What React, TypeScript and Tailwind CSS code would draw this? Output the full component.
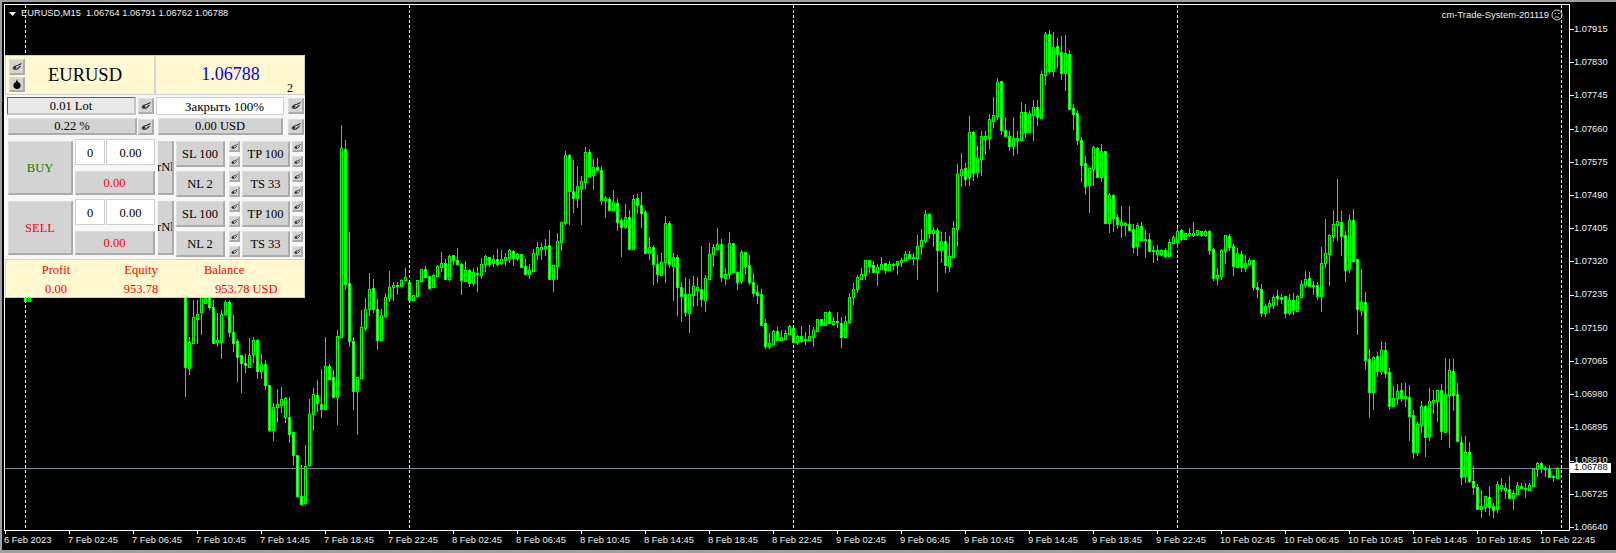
import React from "react";

type Row = number[];

// candles as read off the chart: [high, bodyTop, bodyBottom, low, bear?] in 1/3 px from y0
const segments: { x0: number; y0: number; rows: Row[] }[] = [
  { x0: 25, y0: 280, rows: [[0, 0, 63, 66, 1], [0, 0, 63, 66]] },
  {
    x0: 185,
    y0: 280,
    rows: [
      [0, 0, 262, 350, 1], [172, 187, 265, 285], [60, 112, 189, 192], [60, 103, 117, 192], [0, 40, 95, 165],
      [50, 55, 68, 70], [40, 50, 82, 90, 1], [60, 82, 190, 192, 1], [100, 181, 187, 200], [90, 103, 185, 236],
      [60, 67, 103, 108], [60, 67, 157, 170, 1], [105, 157, 190, 215, 1], [178, 184, 230, 305, 1], [224, 226, 250, 338, 1],
      [222, 250, 256, 278, 1], [175, 226, 260, 262], [172, 181, 223, 250], [178, 181, 272, 296, 1], [222, 253, 272, 298],
      [240, 253, 314, 330, 1], [314, 316, 449, 455, 1], [368, 382, 449, 482], [328, 371, 382, 430], [322, 358, 374, 400],
      [350, 355, 412, 430], [350, 412, 461, 488, 1], [457, 457, 524, 555, 1], [524, 524, 647, 655, 1], [555, 647, 672, 678, 1],
      [495, 557, 670, 675], [358, 403, 554, 562], [325, 343, 401, 452], [300, 346, 370, 395, 1], [268, 373, 388, 415, 1],
      [172, 259, 388, 390], [252, 259, 296, 300, 1], [270, 292, 350, 352, 1], [150, 169, 350, 435],
    ],
  },
  { x0: 341, y0: 110, rows: [[45, 115, 681, 683], [90, 118, 521, 540, 1], [365, 520, 694, 712, 1]] },
  { x0: 353, y0: 280, rows: [[170, 184, 332, 390, 1], [290, 292, 332, 465], [90, 141, 293, 295]] },
  {
    x0: 365,
    y0: 110,
    rows: [
      [565, 598, 654, 662], [490, 538, 597, 618], [507, 535, 598, 610, 1], [568, 598, 689, 720, 1], [598, 616, 689, 690],
      [548, 562, 617, 624], [484, 532, 563, 575], [516, 526, 532, 572], [516, 525, 526, 555], [507, 511, 527, 528],
      [475, 502, 510, 512], [515, 517, 570, 573, 1], [556, 556, 569, 570], [510, 511, 557, 558], [476, 478, 513, 515],
      [468, 478, 500, 503, 1], [497, 499, 533, 534, 1], [492, 495, 530, 531], [465, 468, 497, 500], [426, 460, 470, 487],
      [447, 460, 507, 509, 1], [434, 438, 507, 513], [434, 436, 450, 465, 1], [414, 451, 461, 466, 1], [460, 462, 509, 555, 1],
      [453, 481, 513, 516], [478, 481, 518, 530, 1], [475, 487, 518, 527], [470, 490, 493, 546], [445, 462, 494, 507],
      [436, 438, 462, 486], [440, 442, 461, 470, 1], [435, 448, 458, 471], [418, 447, 461, 468, 1], [420, 448, 459, 466],
      [428, 442, 450, 468], [417, 420, 443, 460], [420, 423, 443, 468, 1], [430, 432, 443, 454], [431, 433, 471, 474, 1],
      [447, 469, 491, 494, 1], [462, 481, 491, 507], [418, 430, 482, 484], [396, 412, 431, 450], [400, 411, 416, 450],
      [388, 408, 413, 438], [360, 406, 506, 508, 1], [466, 466, 506, 545], [370, 394, 467, 510], [335, 337, 395, 423],
      [123, 136, 338, 344], [132, 136, 242, 345, 1], [150, 244, 263, 309, 1], [168, 229, 263, 294], [197, 214, 233, 345],
      [112, 127, 215, 236], [118, 127, 197, 203, 1], [148, 172, 194, 240], [144, 172, 179, 180, 1], [168, 179, 269, 285, 1],
      [258, 265, 269, 324], [262, 268, 299, 303, 1], [240, 277, 299, 303], [267, 280, 335, 362, 1],
    ],
  },
  {
    x0: 621,
    y0: 130,
    rows: [
      [265, 270, 290, 380, 1], [222, 262, 290, 296], [240, 262, 356, 358, 1], [195, 208, 357, 360], [192, 205, 226, 252, 1],
      [186, 226, 248, 294, 1], [240, 247, 370, 372, 1], [322, 352, 368, 390], [346, 352, 403, 465, 1], [376, 403, 433, 458, 1],
      [370, 397, 436, 438], [258, 280, 395, 458], [273, 280, 403, 414, 1], [370, 382, 407, 513], [376, 382, 472, 558, 1],
      [456, 472, 497, 576, 1], [441, 493, 545, 560, 1], [447, 493, 548, 609], [438, 469, 494, 530], [442, 472, 479, 528],
      [348, 478, 506, 530, 1], [435, 445, 509, 546], [339, 373, 446, 450], [342, 351, 373, 411], [294, 343, 357, 362],
      [327, 343, 440, 456, 1], [415, 433, 443, 464], [306, 340, 431, 447], [340, 340, 425, 426, 1], [422, 427, 455, 480, 1],
      [360, 367, 453, 462], [365, 367, 407, 435, 1], [375, 406, 455, 465, 1], [430, 457, 488, 500, 1], [465, 485, 494, 522, 1],
      [477, 493, 584, 587, 1], [567, 580, 647, 656, 1], [610, 640, 647, 657], [600, 603, 641, 645], [590, 604, 630, 632, 1],
      [600, 622, 629, 630], [600, 610, 626, 628], [586, 587, 611, 612], [594, 595, 636, 638, 1], [615, 618, 635, 645],
      [588, 617, 632, 640, 1], [606, 628, 631, 645], [585, 619, 630, 632], [591, 601, 620, 651], [567, 568, 603, 606],
      [566, 568, 584, 587, 1], [545, 547, 585, 586], [543, 546, 578, 580, 1], [562, 574, 581, 588], [546, 574, 577, 594],
      [560, 580, 620, 654, 1], [558, 574, 620, 622], [490, 502, 575, 582], [460, 478, 502, 525], [435, 441, 476, 488],
      [415, 432, 446, 448], [390, 391, 434, 450], [390, 391, 407, 430, 1], [393, 406, 425, 427, 1], [402, 412, 425, 468],
      [381, 403, 416, 420], [398, 400, 420, 432, 1], [393, 403, 420, 422], [398, 402, 404, 420], [392, 394, 404, 435],
      [384, 391, 395, 410], [363, 373, 389, 396], [364, 373, 383, 388, 1], [368, 381, 384, 404], [315, 349, 383, 450],
      [297, 331, 347, 375], [240, 253, 332, 338], [250, 253, 308, 327, 1], [291, 301, 308, 351], [294, 300, 359, 486, 1],
    ],
  },
  {
    x0: 941,
    y0: 20,
    rows: [
      [636, 664, 690, 730], [636, 664, 735, 760, 1], [648, 708, 738, 755], [603, 625, 710, 712], [432, 462, 626, 680],
      [400, 448, 464, 500], [430, 445, 476, 498, 1], [288, 337, 470, 498], [333, 335, 458, 484, 1], [375, 415, 455, 474],
      [333, 348, 416, 468], [333, 349, 356, 405], [282, 297, 353, 387], [232, 286, 302, 323], [175, 186, 287, 300],
      [183, 184, 329, 345, 1], [291, 329, 347, 352, 1], [333, 349, 377, 393, 1], [291, 355, 377, 407], [333, 354, 361, 402],
      [246, 277, 359, 360], [252, 277, 335, 354, 1], [273, 279, 335, 336], [240, 262, 284, 363], [240, 262, 290, 318, 1],
      [153, 163, 293, 296], [36, 42, 164, 195], [30, 42, 152, 162, 1], [36, 82, 152, 171], [54, 79, 101, 145, 1],
      [48, 97, 159, 180, 1], [45, 100, 159, 213], [90, 103, 268, 270, 1], [252, 265, 281, 330, 1], [270, 280, 359, 375, 1],
      [351, 361, 434, 486, 1], [408, 430, 497, 525, 1], [442, 445, 495, 579], [379, 381, 446, 498], [382, 385, 472, 474, 1],
      [372, 393, 471, 486], [392, 394, 608, 612, 1], [519, 526, 608, 639], [522, 526, 593, 636, 1], [582, 592, 612, 627, 1],
      [558, 606, 614, 654], [605, 610, 614, 648], [558, 613, 630, 632, 1],
    ],
  },
  {
    x0: 1133,
    y0: 160,
    rows: [
      [192, 208, 260, 278, 1], [190, 196, 257, 288], [186, 199, 239, 240, 1], [210, 238, 239, 293], [219, 238, 273, 276, 1],
      [258, 271, 274, 308], [256, 271, 281, 303], [267, 270, 282, 288], [265, 271, 287, 293, 1], [238, 247, 287, 288],
      [225, 232, 248, 250], [205, 214, 245, 263], [207, 211, 236, 243, 1], [218, 220, 236, 238], [205, 220, 224, 232],
      [186, 220, 224, 232], [209, 211, 222, 228], [212, 214, 226, 230, 1], [210, 213, 226, 232], [211, 213, 269, 285, 1],
      [265, 267, 353, 363, 1], [324, 346, 353, 375], [268, 270, 347, 360], [225, 226, 272, 312], [222, 229, 260, 273, 1],
      [252, 259, 317, 348, 1], [265, 280, 320, 322], [273, 283, 322, 336, 1], [285, 310, 324, 336], [294, 300, 312, 318],
      [300, 301, 381, 393, 1], [366, 382, 388, 414, 1], [372, 388, 458, 471, 1], [432, 438, 458, 471], [420, 430, 437, 459],
      [405, 411, 434, 447], [390, 409, 415, 438, 1], [402, 412, 416, 432, 1], [408, 409, 458, 474, 1], [402, 420, 458, 465],
      [399, 421, 450, 465, 1], [405, 408, 452, 453], [360, 371, 410, 411], [333, 358, 374, 385], [336, 355, 378, 381, 1],
      [363, 376, 377, 405], [366, 376, 407, 420, 1], [261, 310, 407, 456], [177, 280, 309, 324], [222, 226, 281, 378],
      [150, 193, 228, 246], [57, 184, 194, 243], [153, 187, 227, 288, 1], [213, 226, 329, 366, 1], [165, 181, 327, 340],
      [147, 181, 303, 306, 1], [296, 298, 446, 525, 1], [327, 427, 449, 468], [396, 427, 599, 630, 1], [567, 598, 695, 773, 1],
      [588, 592, 695, 750], [575, 589, 632, 650, 1], [543, 571, 632, 645], [546, 571, 638, 654, 1],
    ],
  },
  {
    x0: 1389,
    y0: 300,
    rows: [
      [205, 217, 318, 330, 1], [258, 295, 318, 320], [252, 274, 294, 315], [250, 271, 294, 306, 1], [250, 289, 293, 320],
      [255, 292, 347, 423, 1], [330, 346, 456, 477, 1], [366, 373, 456, 468], [303, 319, 376, 398], [315, 319, 410, 471, 1],
      [264, 304, 407, 423], [270, 300, 305, 342], [269, 271, 302, 366], [252, 271, 392, 420, 1], [174, 283, 396, 398],
      [177, 211, 284, 444], [177, 214, 284, 333, 1], [249, 283, 422, 423, 1], [408, 427, 530, 555, 1], [408, 457, 527, 549],
      [426, 457, 543, 549, 1], [498, 544, 560, 585, 1], [552, 562, 627, 630, 1], [570, 618, 627, 654], [588, 589, 620, 636],
      [558, 592, 620, 648, 1], [609, 619, 629, 654, 1], [543, 553, 628, 639], [534, 556, 563, 576], [549, 564, 569, 597],
      [528, 568, 594, 597, 1], [570, 580, 594, 630], [546, 556, 582, 585],
    ],
  },
  {
    x0: 1521,
    y0: 420,
    rows: [
      [190, 197, 204, 207, 1], [188, 205, 208, 235], [190, 196, 210, 212], [147, 147, 197, 199], [126, 129, 146, 170],
      [126, 129, 145, 160, 1], [138, 143, 146, 170], [135, 146, 170, 172, 1], [165, 168, 172, 185, 1], [142, 144, 175, 178],
    ],
  },
];

const prices = [
  "1.07915", "1.07830", "1.07745", "1.07660", "1.07575", "1.07490", "1.07405", "1.07320",
  "1.07235", "1.07150", "1.07065", "1.06980", "1.06895", "1.06810", "1.06725", "1.06640",
];

const hours = ["02:45", "06:45", "10:45", "14:45", "18:45", "22:45"];
const times = ["6 Feb 2023"];
[7, 8, 9, 10].forEach((d) => hours.forEach((h) => times.push(`${d} Feb ${h}`)));

function Candles() {
  return (
    <g shapeRendering="crispEdges">
      {segments.map((seg) =>
        seg.rows.map((r, i) => {
          const x = seg.x0 + i * 4;
          const hi = Math.round(seg.y0 + r[0] / 3);
          const top = Math.round(seg.y0 + r[1] / 3);
          const bot = Math.max(Math.round(seg.y0 + r[2] / 3), top + 1);
          const lo = Math.round(seg.y0 + r[3] / 3);
          return (
            <g key={x}>
              <rect x={x} y={hi} width={1} height={Math.max(lo - hi, 1)} fill="#00ff00" />
              <rect x={x - 1} y={top} width={3} height={bot - top + 1} fill="#00ff00" />
              {bot - top > 1 && (
                <rect x={x} y={top + 1} width={1} height={bot - top - 1} fill={r[4] ? "#ffffff" : "#000000"} />
              )}
            </g>
          );
        })
      )}
    </g>
  );
}

function Chart() {
  return (
    <svg className="absolute left-0 top-0" width={1564} height={525} viewBox="5 5 1564 525">
      {[25, 409, 793, 1177, 1561].map((x) => (
        <line key={x} x1={x + 0.5} x2={x + 0.5} y1={5} y2={530} stroke="#ffffff" strokeDasharray="3 2" shapeRendering="crispEdges" />
      ))}
      <line x1={5} x2={1569} y1={468.5} y2={468.5} stroke="#778899" shapeRendering="crispEdges" />
      <Candles />
    </svg>
  );
}

function Pen({ small }: { small?: boolean }) {
  return (
    <svg width={small ? 7 : 10} height={small ? 5 : 7} viewBox="0 0 10 7" fill="none" stroke="#2a2a2a">
      <path d="M1 5C2 3.2 4 2.4 6 2.2L9.5 0.5M1.5 6.2H5L8.5 3" strokeWidth="1.1" />
      <path d="M1 5.5H4V3.8H2Z" fill="#2a2a2a" strokeWidth="0.6" />
    </svg>
  );
}

const gray =
  "bg-[#d3d3d3] border-t border-l border-t-[#dedede] border-l-[#dedede] border-r-2 border-b-2 border-r-[#ababab] border-b-[#ababab] flex items-center justify-center whitespace-nowrap overflow-hidden";
const white = "bg-white border border-[#cfcfcf] flex items-center justify-center";

function IconBtn() {
  return (
    <div className={`${gray} w-[16px] h-[16px] shrink-0`}>
      <Pen />
    </div>
  );
}

function TinyPair() {
  return (
    <div className="flex flex-col gap-[4px] shrink-0">
      <div className={`${gray} w-[11px] h-[11px]`}>
        <Pen small />
      </div>
      <div className={`${gray} w-[11px] h-[11px]`}>
        <Pen small />
      </div>
    </div>
  );
}

function TradeBlock({ label, color, sl, tp, nl, ts }: { label: string; color: string; sl: string; tp: string; nl: string; ts: string }) {
  return (
    <div className="flex h-[58px] pl-[3px]">
      <div className={`${gray} w-[65px] h-[54px] mt-[2px] pt-[2px] ${color}`}>{label}</div>
      <div className="w-[80px] ml-[2px] flex flex-col">
        <div className="flex gap-[1px] h-[26px]">
          <div className={`${white} w-[30px] pt-[2px]`}>0</div>
          <div className={`${white} w-[49px] pt-[2px]`}>0.00</div>
        </div>
        <div className={`${gray} h-[24px] mt-[6px] pt-[2px] text-[#ff0000]`}>0.00</div>
      </div>
      <div className="w-[16px] h-[54px] mt-[2px] ml-[3px] bg-[#d3d3d3] border-r-2 border-b-2 border-r-[#ababab] border-b-[#ababab] flex items-center overflow-hidden whitespace-nowrap">
        <span className="-ml-[1px]">rNl</span>
      </div>
      <div className="ml-[2px] mt-[2px] flex flex-col gap-[4px]">
        {[[sl, tp], [nl, ts]].map(([a, b]) => (
          <div key={a} className="flex h-[26px]">
            <div className={`${gray} w-[49px] h-[26px] pt-[2px]`}>{a}</div>
            <div className="ml-[4px]">
              <TinyPair />
            </div>
            <div className={`${gray} w-[48px] h-[26px] ml-[2px] pt-[2px]`}>{b}</div>
            <div className="ml-[2px]">
              <TinyPair />
            </div>
          </div>
        ))}
      </div>
    </div>
  );
}

function Panel() {
  return (
    <div className="absolute left-0 top-[50px] w-[300px] h-[243px] bg-[#f7f7f7] flex flex-col font-['Liberation_Serif',serif] text-[12.5px] text-black leading-none">
      {/* symbol and price */}
      <div className="h-[40px] flex bg-[#fff8d0] border border-[#cfcfcf] shrink-0">
        <div className="w-[150px] flex border-r-2 border-[#d6d6d6] pl-[3px] pt-[3px]">
          <div className="flex flex-col gap-[2px]">
            <div className={`${gray} w-[16px] h-[16px]`}>
              <Pen />
            </div>
            <div className={`${gray} w-[16px] h-[15px]`}>
              <svg width={8} height={10} viewBox="0 0 8 10">
                <path d="M4 0L5 3A3.6 3.6 0 1 1 3 3Z" fill="#000" />
              </svg>
            </div>
          </div>
          <div className="flex-1 flex items-center justify-center text-[18.5px] pr-[9px] pb-[3px]">EURUSD</div>
        </div>
        <div className="relative flex-1 flex items-center justify-center text-[18px] text-[#0000ff] pb-[3px] pl-[1px]">
          1.06788
          <span className="absolute left-[131px] top-[26px] text-[12px] text-black">2</span>
        </div>
      </div>
      {/* lot and close */}
      <div className="flex items-center h-[18px] mt-[2px] pl-[2px] shrink-0">
        <div className="w-[129px] h-[18px] pt-[2px] bg-[#ebe8e8] border-t border-l border-t-[#606060] border-l-[#606060] border-r-2 border-b-2 border-r-[#c4c4c4] border-b-[#c4c4c4] flex items-center justify-center">
          0.01 Lot
        </div>
        <div className="ml-[2px]">
          <IconBtn />
        </div>
        <div className={`${white} w-[128px] h-[18px] ml-[2px] pl-[9px] text-[13px]`}>Закрыть 100%</div>
        <div className="ml-[4px]">
          <IconBtn />
        </div>
      </div>
      <div className="flex items-center h-[17px] mt-[3px] pl-[3px] shrink-0">
        <div className={`${gray} w-[129px] h-[17px]`}>0.22 %</div>
        <div className="ml-[1px]">
          <IconBtn />
        </div>
        <div className={`${gray} w-[125px] h-[17px] ml-[4px]`}>0.00 USD</div>
        <div className="ml-[5px]">
          <IconBtn />
        </div>
      </div>
      {/* buy and sell */}
      <div className="mt-[4px] flex flex-col gap-[2px] shrink-0">
        <TradeBlock label="BUY" color="text-[#008000]" sl="SL 100" tp="TP 100" nl="NL 2" ts="TS 33" />
        <TradeBlock label="SELL" color="text-[#ff0000]" sl="SL 100" tp="TP 100" nl="NL 2" ts="TS 33" />
      </div>
      {/* account */}
      <div className="mt-[2px] flex-1 bg-[#fff8d0] border border-[#cfcfcf] text-[#ff0000] grid grid-cols-[100px_70px_1fr] grid-rows-2 items-center pt-[1px]">
        <span className="text-center">Profit</span>
        <span className="text-center">Equity</span>
        <span className="pl-[28px]">Balance</span>
        <span className="text-center pt-[3px]">0.00</span>
        <span className="text-center pt-[3px]">953.78</span>
        <span className="pl-[39px] pt-[3px]">953.78 USD</span>
      </div>
    </div>
  );
}

function PriceAxis() {
  return (
    <div className="relative w-[46px] h-[527px] pt-[9px] flex flex-col font-['Liberation_Sans',sans-serif] text-[9.3px] text-[#f0f0f0] leading-none">
      {prices.map((p) => (
        <div key={p} className="h-[33.2px] shrink-0 flex items-center">
          <span className="w-[4px] h-px bg-white" />
          <span>{p}</span>
        </div>
      ))}
      <div className="absolute left-0 top-[459px] w-[41px] h-[10px] bg-white text-black flex items-center pl-[4px]">1.06788</div>
    </div>
  );
}

function TimeAxis() {
  return (
    <div className="ml-[2px] flex font-['Liberation_Sans',sans-serif] text-[9.4px] text-[#f0f0f0] leading-none">
      {times.map((t) => (
        <div key={t} className="w-[64px] shrink-0 flex flex-col whitespace-nowrap">
          <span className="ml-[1px] w-px h-[3px] bg-white" />
          <span className="mt-[1px]">{t}</span>
        </div>
      ))}
    </div>
  );
}

export default function App() {
  return (
    <div className="w-[1616px] h-[553px] bg-black border-l-2 border-t-2 border-b-[3px] border-[#a0a0a0] overflow-hidden">
      <div className="flex ml-[2px] mt-[2px]">
        <div className="relative w-[1566px] h-[527px] border border-white overflow-hidden shrink-0">
          <Chart />
          <div className="absolute left-[4px] top-[4px] flex items-center gap-[5px] font-['Liberation_Sans',sans-serif] text-[9.3px] text-[#f0f0f0] leading-none whitespace-pre">
            <svg width={7} height={4} viewBox="0 0 7 4">
              <path d="M0 0H7L3.5 4Z" fill="#ffffff" />
            </svg>
            EURUSD,M15  1.06764 1.06791 1.06762 1.06788
          </div>
          <div className="absolute right-[6px] top-[4px] flex items-center gap-[2px] font-['Liberation_Sans',sans-serif] text-[9.4px] text-[#f0f0f0] leading-none">
            cm-Trade-System-201119
            <svg width={12} height={12} viewBox="0 0 12 12" fill="none" stroke="#d8d8d8">
              <circle cx="6" cy="6" r="5" />
              <path d="M3.5 9C4.5 7.5 7.5 7.5 8.5 9M3.5 4.5H5M7 4.5H8.5" />
            </svg>
          </div>
          <Panel />
        </div>
        <PriceAxis />
      </div>
      <TimeAxis />
    </div>
  );
}
